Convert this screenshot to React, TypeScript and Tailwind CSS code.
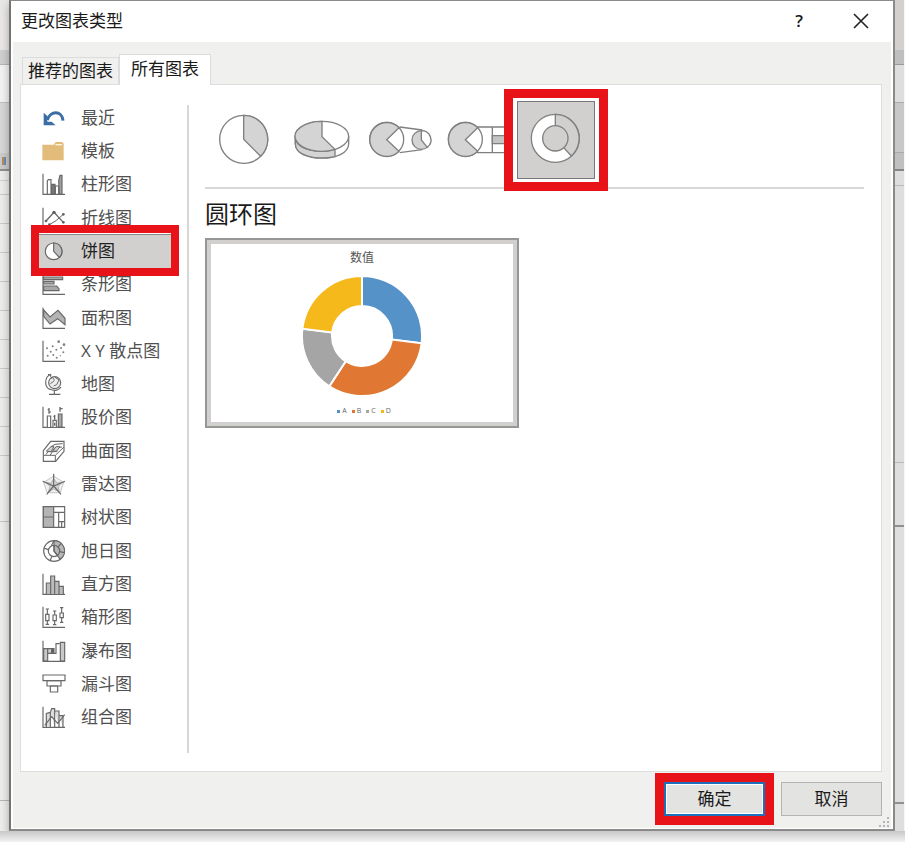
import React, { useState } from 'react';

type IconProps = { children: React.ReactNode };

// All category glyphs share a 72 unit grid, three units per pixel
function Glyph({ children }: IconProps) {
  return (
    <svg
      viewBox="0 0 72 72"
      className="w-6 h-6 shrink-0"
      fill="none"
      stroke="#686868"
      strokeWidth="3.5"
      aria-hidden="true"
    >
      {children}
    </svg>
  );
}

const axes = <path d="M3 5V67H69" />;

const categories = [
  {
    name: '最近',
    icon: (
      <Glyph>
        <path d="M16 42C24 14 60 12 63 44" stroke="#3a6ea5" strokeWidth="9" />
        <path d="M5 20V58H41L29 47H16V30Z" fill="#3a6ea5" stroke="none" />
      </Glyph>
    )
  },
  {
    name: '模板',
    icon: (
      <Glyph>
        <path d="M1 17H35L41 9H61L65 14V64H1Z" fill="#e3bc7c" stroke="none" />
        <path d="M40 17H60" stroke="#fdf4e2" strokeWidth="4" />
      </Glyph>
    )
  },
  {
    name: '柱形图',
    icon: (
      <Glyph>
        {axes}
        <path d="M16 66V27L19 23H27V66M40 66V42H50V66" />
        <path d="M29 37H39V66H29Z" fill="#777" />
        <path d="M50 27L54 10H60V66H52Z" fill="#a0a0a0" />
      </Glyph>
    )
  },
  {
    name: '折线图',
    icon: (
      <Glyph>
        {axes}
        <path d="M12 45L36 19L64 49" strokeWidth="4" />
        <path d="M22 56L42 44L64 25" strokeWidth="3" />
        <g fill="#606060" stroke="none">
          <circle cx="12" cy="45" r="4" />
          <circle cx="36" cy="19" r="5" />
          <circle cx="64" cy="49" r="4" />
          <circle cx="22" cy="56" r="4" />
          <circle cx="64" cy="25" r="4" />
        </g>
      </Glyph>
    )
  },
  {
    name: '饼图',
    icon: (
      <Glyph>
        <circle cx="35" cy="37" r="25" fill="#fff" />
        <path d="M35 12A25 25 0 0 1 52 55L35 37Z" fill="#bdbdbd" />
      </Glyph>
    )
  },
  {
    name: '条形图',
    icon: (
      <Glyph>
        {axes}
        <g fill="#a8a8a8">
          <path d="M5 15H62V23H5Z" />
          <path d="M5 28H36V36H5Z" />
          <path d="M5 42H44L51 50V56H5Z" />
        </g>
      </Glyph>
    )
  },
  {
    name: '面积图',
    icon: (
      <Glyph>
        <path d="M5 12L24 33L48 13L69 37V56L47 38L24 54L5 31Z" fill="#b4b4b4" />
        {axes}
      </Glyph>
    )
  },
  {
    name: 'X Y 散点图',
    icon: (
      <Glyph>
        {axes}
        <g fill="#808080" stroke="none">
          <circle cx="15" cy="28" r="3" />
          <circle cx="17" cy="50" r="3" />
          <circle cx="26" cy="38" r="3" />
          <circle cx="32" cy="22" r="3" />
          <circle cx="34" cy="48" r="3" />
          <circle cx="43" cy="32" r="3" />
          <circle cx="50" cy="8" r="4" />
          <circle cx="66" cy="17" r="4" />
          <circle cx="57" cy="27" r="3" />
          <circle cx="64" cy="40" r="3" />
          <circle cx="44" cy="56" r="3" />
          <circle cx="55" cy="50" r="2" />
        </g>
      </Glyph>
    )
  },
  {
    name: '地图',
    icon: (
      <Glyph>
        <circle cx="38" cy="32" r="18" fill="#eee" />
        <path d="M25 21C32 12 40 22 34 29L25 35M39 16L51 24L44 38L35 42" strokeWidth="3" />
        <path d="M26 7C6 16 7 46 24 52C39 59 52 54 57 45M18 8H26V14M37 55V66M21 67H55" />
      </Glyph>
    )
  },
  {
    name: '股价图',
    icon: (
      <Glyph>
        {axes}
        <path d="M16 66V33H26V66M33 66V46H43V66" fill="#fff" />
        <path d="M49 66V27H60V66Z" fill="#a8a8a8" />
        <path d="M21 9V26M17 14H21M21 21H26M38 30V44M34 34H38M54 6V20M54 11H62M38 53V62" strokeWidth="4" />
      </Glyph>
    )
  },
  {
    name: '曲面图',
    icon: (
      <Glyph>
        <path d="M4 35L26 7H66V37L41 67H4Z" />
        <path d="M4 49H40L66 24M40 49V66M12 47L27 23L39 16L62 14M25 48L38 27L60 24M18 38H46" strokeWidth="3" />
        <path d="M13 36L27 23H36L27 38ZM32 37L42 23H54L44 36Z" fill="#d6d6d6" strokeWidth="3" />
      </Glyph>
    )
  },
  {
    name: '雷达图',
    icon: (
      <Glyph>
        <path d="M35 12L65 31L55 62H15L5 31Z" fill="#f0f0f0" stroke="#aaa" strokeWidth="2" />
        <path d="M35 20L45 33L60 31L48 44L52 60L35 51L19 60L24 44L12 31L27 34Z" fill="#d4d4d4" stroke="#999" strokeWidth="2" />
        <path d="M35 5V42M2 28L35 42L69 28M35 42L14 67M35 42L57 67" />
      </Glyph>
    )
  },
  {
    name: '树状图',
    icon: (
      <Glyph>
        <path d="M4 5H68V67H4Z" />
        <path d="M4 5H35V67H4Z" fill="#b4b4b4" />
        <path d="M4 36H35M35 22H68M50 22V67M50 50H68M59 50V67" />
      </Glyph>
    )
  },
  {
    name: '旭日图',
    icon: (
      <Glyph>
        <circle cx="36" cy="36" r="31" />
        <path d="M36 5A31 31 0 0 1 55 61L36 36Z" fill="#b8b8b8" />
        <circle cx="36" cy="36" r="17" />
        <path d="M36 19V36L47 50M19 32L6 27M30 52L24 65M36 5L28 20M48 24L57 14M53 38L67 41" />
      </Glyph>
    )
  },
  {
    name: '直方图',
    icon: (
      <Glyph>
        {axes}
        <path d="M13 66V33H26V66M26 66V12H38V66M38 66V28H51V66M51 66V43H64V66" fill="#bcbcbc" />
      </Glyph>
    )
  },
  {
    name: '箱形图',
    icon: (
      <Glyph>
        {axes}
        <path d="M16 12V58M11 12H21M11 58H21M38 18V59M33 18H43M33 59H43M59 8V52M54 8H64M54 52H64" />
        <path d="M11 28H21V47H11ZM33 30H43V47H33ZM54 24H64V38H54Z" fill="#fff" />
      </Glyph>
    )
  },
  {
    name: '瀑布图',
    icon: (
      <Glyph>
        <path d="M5 29H17V66H5ZM55 10H68V66H55Z" fill="#c9c9c9" />
        <path d="M17 29H30V43H17Z" fill="#ccc" />
        <path d="M29 29H36V43H29Z" fill="#606060" />
        <path d="M36 43H42V14H53" />
        {axes}
      </Glyph>
    )
  },
  {
    name: '漏斗图',
    icon: (
      <Glyph>
        <path d="M3 9H69V26H3Z" />
        <path d="M15 26H57V42H15Z" />
        <path d="M25 42H47V60H25Z" />
      </Glyph>
    )
  },
  {
    name: '组合图',
    icon: (
      <Glyph>
        {axes}
        <path d="M13 66V25L25 22V66M25 22L29 11H38V66M38 18H51V66M51 32H63V66" fill="#ddd" />
        <path d="M8 61L29 35L47 55L68 29" />
      </Glyph>
    )
  }
];

const lineStyle = { fill: 'none', stroke: '#808080', strokeWidth: 4 };

const pieTypes = [
  {
    name: '饼图',
    icon: (
      <svg viewBox="0 0 234 234" className="w-full h-full" {...lineStyle}>
        <circle cx="116" cy="115" r="72" />
        <path d="M116 43A72 72 0 0 1 167 166L116 115Z" fill="#d4d4d4" />
      </svg>
    )
  },
  {
    name: '三维饼图',
    icon: (
      <svg viewBox="0 0 234 234" className="w-full h-full" {...lineStyle}>
        <path d="M37 106V128C37 186 197 186 197 128V106" fill="#fff" />
        <path d="M37 106V128C37 164 96 178 156 167V142C96 160 37 145 37 106Z" fill="#d4d4d4" />
        <ellipse cx="117" cy="106" rx="80" ry="45" fill="#fff" />
        <path d="M117 61A80 45 0 1 0 156 145L117 107Z" fill="#d4d4d4" />
      </svg>
    )
  },
  {
    name: '子母饼图',
    icon: (
      <svg viewBox="0 0 234 234" className="w-full h-full" {...lineStyle}>
        <path d="M116 78L184 87M116 155L184 146" />
        <circle cx="77" cy="115" r="51" fill="#fff" />
        <path d="M114 80A51 51 0 1 0 114 151L77 116Z" fill="#d4d4d4" />
        <circle cx="181" cy="117" r="28" fill="#d4d4d4" />
        <path d="M181 89A28 28 0 0 1 199 139L181 117Z" fill="#fff" />
      </svg>
    )
  },
  {
    name: '复合条饼图',
    icon: (
      <svg viewBox="0 0 234 234" className="w-full h-full" {...lineStyle}>
        <path d="M114 78H206V155H114M160 78V155" />
        <path d="M160 104H206V128H160Z" fill="#c4c4c4" />
        <circle cx="79" cy="115" r="51" fill="#fff" />
        <path d="M116 80A51 51 0 1 0 116 151L79 116Z" fill="#d4d4d4" />
      </svg>
    )
  },
  {
    name: '圆环图',
    icon: (
      <svg viewBox="0 0 234 234" className="w-full h-full" {...lineStyle}>
        <circle cx="115" cy="112" r="72" fill="#fff" />
        <path d="M115 40A72 72 0 0 1 163 165L115 112Z" fill="#d1d0ce" />
        <circle cx="115" cy="112" r="38" fill="#d1d0ce" />
      </svg>
    )
  }
];

const legend = [
  { label: 'A', color: 'bg-[#5592c8]' },
  { label: 'B', color: 'bg-[#e07833]' },
  { label: 'C', color: 'bg-[#a5a5a5]' },
  { label: 'D', color: 'bg-[#f5b91b]' }
];

// Rows of the worksheet that stay visible on either side of the dialog
function SheetLeft() {
  return (
    <div className="w-[9px] shrink-0 flex flex-col bg-[#ececeb]">
      <div className="h-[50px] bg-[#e8e7e6]" />
      <div className="h-[15px] bg-[#cfcfcf] border-b border-[#b5b5b5]" />
      <div className="h-[38px] bg-[#f2f2f2] border-b border-[#c0c0c0]" />
      <div className="h-[50px] bg-[#d6d6d6]" />
      <div className="h-[18px] flex items-center bg-[#cbcbcb] border-b-2 border-[#909090]">
        <div className="w-[2px] h-2 ml-[2px] bg-[#b78c5a]" />
        <div className="w-[2px] h-2 bg-[#6c8db5]" />
      </div>
      <div className="h-[10px] border-b border-[#cfcfcf]" />
      <div className="h-[14px] border-b border-[#c9c9c9]" />
      {Array.from({ length: 9 }, (_, i) => (
        <div key={i} className="h-[29px] border-b border-[#c9c9c9]" />
      ))}
      <div className="h-[66px] border-b border-[#c4c4c4]" />
      <div className="h-[279px] border-b border-[#b5b5b5]" />
    </div>
  );
}

function SheetRight() {
  return (
    <div className="w-[10px] shrink-0 flex flex-col bg-[#dedede] border-r border-[#f5f5f5]">
      <div className="h-[50px] bg-[#d2d1d0]" />
      <div className="h-[15px] bg-[#bfbfbf] border-b border-[#999]" />
      <div className="h-[38px] bg-[#dedede] border-b border-[#aaa]" />
      <div className="h-[50px] bg-[#c8c8c8] border-b border-[#aaa]" />
      <div className="h-[18px] bg-[#c0c0c0] border-b-2 border-[#858585]" />
      <div className="h-[15px] border-b border-[#b8b8b8]" />
      <div className="h-[277px] border-b border-[#b8b8b8]" />
      <div className="h-[64px] border-b-2 border-[#909090]" />
      <div className="h-[277px] border-b-2 border-[#909090]" />
    </div>
  );
}

function DoughnutPreview() {
  return (
    <div className="w-[314px] p-1 bg-[#d1d0ce] border-2 border-[#969694]">
      <div className="flex flex-col items-center bg-white pt-[6px] pb-[6px]">
        <div className="text-[12px] leading-[16px] text-[#555]">数值</div>
        <svg viewBox="-62 -62 124 124" className="w-[124px] h-[124px] mt-2" aria-hidden="true">
          <g stroke="#fff" strokeWidth="2">
            <path d="M0 -60A60 60 0 0 1 59.6 7.3L29.8 3.6A30 30 0 0 0 0 -30Z" fill="#5592c8" />
            <path d="M59.6 7.3A60 60 0 0 1 -32.7 50.3L-16.3 25.2A30 30 0 0 0 29.8 3.6Z" fill="#e07833" />
            <path d="M-32.7 50.3A60 60 0 0 1 -59.6 -7.3L-29.8 -3.6A30 30 0 0 0 -16.3 25.2Z" fill="#a5a5a5" />
            <path d="M-59.6 -7.3A60 60 0 0 1 0 -60L0 -30A30 30 0 0 0 -29.8 -3.6Z" fill="#f5b91b" />
          </g>
        </svg>
        <div className="flex gap-[5px] mt-2 pl-1">
          {legend.map((item) => (
            <div key={item.label} className="flex items-center gap-[2px] text-[7px] leading-[10px] text-[#666]">
              <span className={`w-[3px] h-[3px] ${item.color}`} />
              {item.label}
            </div>
          ))}
        </div>
      </div>
    </div>
  );
}

function App() {
  const [category, setCategory] = useState('饼图');
  const [pieType, setPieType] = useState('圆环图');

  return (
    <div className="min-h-screen flex flex-col bg-[#f0f0f0] text-[17px] leading-[24px] text-[#1a1a1a] font-['Open_Sans','Noto_Sans_CJK_SC',sans-serif]">
      <div className="flex-1 flex">
        <SheetLeft />
        <div
          role="dialog"
          aria-label="更改图表类型"
          className="flex-1 min-w-0 flex flex-col bg-[#f0f0ee] border-2 border-t border-[#8a8a8a] border-l-[#747474] shadow-[0_4px_8px_rgba(0,0,0,0.3)]"
        >
          <header className="h-[41px] flex items-center bg-white pl-[10px] pr-3 pb-[2px]">
            <h1 className="flex-1">更改图表类型</h1>
            <button type="button" aria-label="帮助" className="w-10 h-8 mr-[22px] font-semibold">
              ?
            </button>
            <button type="button" aria-label="关闭" className="w-10 h-8 flex items-center justify-center">
              <svg viewBox="0 0 16 16" className="w-4 h-4" stroke="#222" strokeWidth="1.6">
                <path d="M1 1L15 15M15 1L1 15" />
              </svg>
            </button>
          </header>

          <div className="flex-1 flex flex-col border-x-2 border-b border-white pt-3 px-[7px] pr-[9px]">
            <div role="tablist" className="flex items-end pl-[2px]">
              <button
                type="button"
                role="tab"
                aria-selected="false"
                className="h-[27px] px-[5px] border border-b-0 border-[#dcdcdc]"
              >
                推荐的图表
              </button>
              <button
                type="button"
                role="tab"
                aria-selected="true"
                className="relative h-[31px] -mb-px px-[11px] pb-[2px] bg-white border border-b-0 border-[#dcdcdc]"
              >
                所有图表
              </button>
            </div>

            <div className="flex-1 flex bg-white border border-[#dedede]">
              <ul className="w-[132px] ml-[18px] mt-4 mb-[37px] flex flex-col">
                {categories.map((item) => {
                  const selected = item.name === category;
                  return (
                    <li key={item.name} className="flex-1 flex">
                      <button
                        type="button"
                        onClick={() => setCategory(item.name)}
                        className={`relative flex-1 flex items-center gap-[15px] pl-[3px] whitespace-nowrap ${
                          selected ? 'z-10 bg-[#d1d0ce] border-t border-[#888] text-[#222]' : 'text-[#505050]'
                        }`}
                      >
                        {item.icon}
                        {item.name}
                        {selected && (
                          <span className="absolute -inset-x-2 -top-[10px] -bottom-2 border-8 border-[#e81318] pointer-events-none" />
                        )}
                      </button>
                    </li>
                  );
                })}
              </ul>
              <div className="w-[2px] mt-5 mb-[18px] ml-4 bg-[#d8d8d8]" />

              <section className="flex-1 min-w-0 pt-4 pl-4 pr-[17px]">
                <div className="flex pb-2 border-b-2 border-[#d8d8d8]">
                  {pieTypes.map((item) => {
                    const selected = item.name === pieType;
                    return (
                      <button
                        key={item.name}
                        type="button"
                        aria-label={item.name}
                        onClick={() => setPieType(item.name)}
                        className={`relative w-[78px] h-[78px] ${
                          selected
                            ? 'z-10 bg-[#d1d0ce] outline outline-[#777] outline-offset-[-1px] shadow-[0_0_0_4px_#fff]'
                            : ''
                        }`}
                      >
                        {item.icon}
                        {selected && (
                          <span className="absolute -inset-x-[13px] -inset-y-3 border-[9px] border-[#e81318] pointer-events-none" />
                        )}
                      </button>
                    );
                  })}
                </div>
                <h2 className="mt-[9px] mb-2 text-[24px] leading-[32px]">{pieType}</h2>
                <DoughnutPreview />
              </section>
            </div>

            <footer className="relative flex justify-end gap-4 pt-[10px] pb-3">
              <button
                type="button"
                className="relative w-[101px] h-[34px] bg-[#e3e3e1] border-2 border-[#1b6fbd] outline outline-white outline-offset-[-3px]"
              >
                确定
                <span className="absolute -inset-[11px] border-[9px] border-[#e81318] pointer-events-none" />
              </button>
              <button type="button" className="w-[101px] h-[34px] bg-[#e3e3e1] border border-[#b3b3b3]">
                取消
              </button>
              <svg viewBox="0 0 12 12" className="absolute -right-2 bottom-0 w-3 h-3" fill="#b5b5b5">
                <path d="M9 1h2v2H9zM5 5h2v2H5zM9 5h2v2H9zM1 9h2v2H1zM5 9h2v2H5zM9 9h2v2H9z" />
              </svg>
            </footer>
          </div>
        </div>
        <SheetRight />
      </div>
      <div className="h-[11px] bg-linear-to-b from-[#c8c8c8] to-[#f2f2f2]" />
    </div>
  );
}

export default App;
